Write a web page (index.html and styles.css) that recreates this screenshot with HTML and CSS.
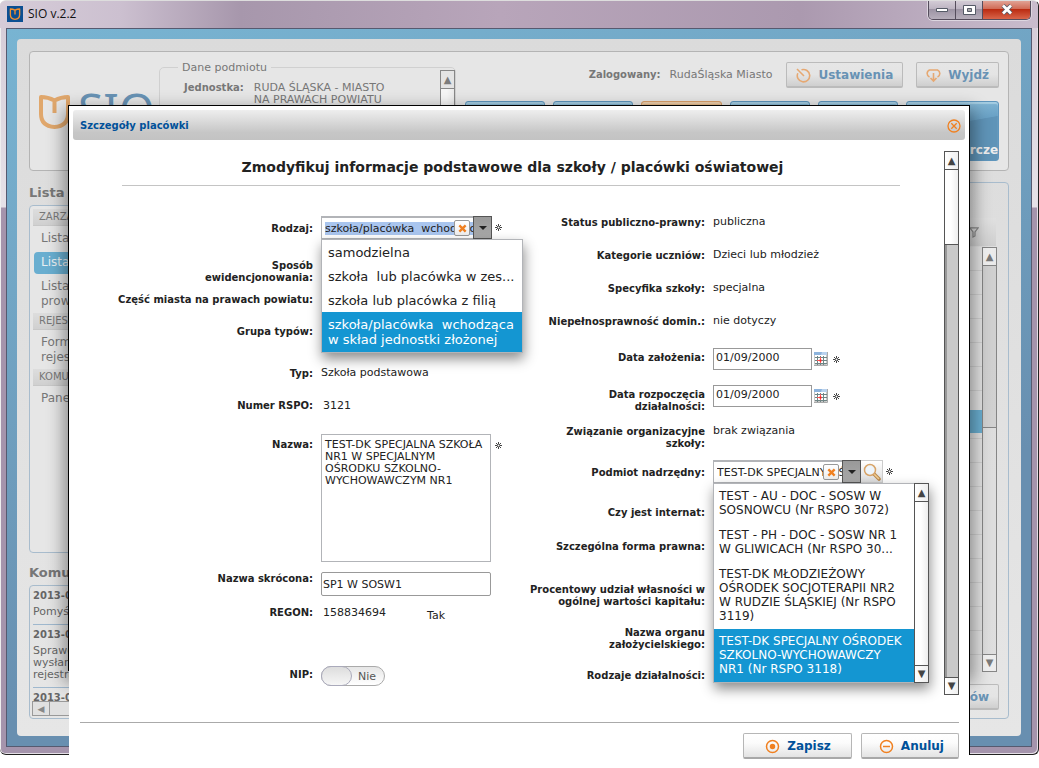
FILE: index.html
```html
<!DOCTYPE html>
<html lang="pl">
<head>
<meta charset="utf-8">
<title>SIO v.2.2</title>
<link rel="stylesheet" href="styles.css">
</head>
<body>
<svg class="defs" aria-hidden="true">
  <symbol id="star" viewBox="0 0 9 9"><path d="M4.500 1v7M1 4.500h7M2 2l5 5M7 2L2 7" stroke="#444" fill="none"/><circle cx="4.500" cy="4.500" r="1" fill="#fff"/></symbol>
  <symbol id="cal" viewBox="0 0 14 14"><path d="M.5.500h12v12H.500z" fill="#fff" stroke="#c9c9c9"/><path d="M0 0h13v3H0z" fill="#8db3dc"/><path d="M8 0h5v3H7z" fill="#b9d2ee"/><path d="M1 5.500h12M1 8.500h12M1 11.500h12M3.500 4v9M6.500 4v9M9.500 4v9" stroke="#6f8585"/><path d="M13.500 0v13.500H0" stroke="#aaa" fill="none"/><path d="M3 8.500h4M6.500 5v6" stroke="#f55" fill="none"/><path d="M5.500 7.500h2v2h-2z" fill="#f22"/></symbol>
  <symbol id="cross" viewBox="0 0 10 10"><path d="M1.500 1.500l7 7M8.500 1.500l-7 7" stroke="#f08020" stroke-width="2.600" fill="none"/></symbol>
  <symbol id="book" viewBox="0 0 31 35"><path d="M2 3q7 0 13.500 3.500Q22 3 29 3v17q0 12-13.500 13Q2 32 2 20zM15.500 7v12" fill="none" stroke="currentColor" stroke-width="4" stroke-linejoin="round"/></symbol>
</svg>

<div class="screen">
<div class="window">
  <header class="titlebar">
    <span class="app-icon"><svg><use href="#book"/></svg></span>
    <span class="app-name">SIO v.2.2</span>
    <div class="win-buttons">
      <button class="wb" aria-label="Minimalizuj"><svg width="12" height="6"><path d="M.5 1.500h11v3H.500z" fill="#fff" stroke="#555a66"/></svg></button>
      <button class="wb" aria-label="Maksymalizuj"><svg width="13" height="10"><path d="M.5.500h12v9H.500z" fill="#fff" stroke="#555a66"/><path d="M4.500 3.500h4v3h-4z" fill="#aaa" stroke="#555a66"/></svg></button>
      <button class="wb close" aria-label="Zamknij okno"><svg width="12" height="11"><path d="M2 1.500l8 8M10 1.500l-8 8" stroke="#555a66" stroke-width="4.400"/><path d="M2 1.500l8 8M10 1.500l-8 8" stroke="#fff" stroke-width="2.800"/></svg></button>
    </div>
  </header>
  <div class="client">
    <main class="panel">
      <section class="top-box">
        <div class="logo"><svg class="mark"><use href="#book"/></svg><span>SIO</span></div>
        <fieldset class="entity">
          <legend>Dane podmiotu</legend>
          <dl><dt>Jednostka:</dt><dd>RUDA ŚLĄSKA - MIASTO<br>NA PRAWACH POWIATU</dd></dl>
          <div class="sb entity-sb"><button aria-label="W górę">▲</button><i></i></div>
        </fieldset>
        <div class="top-right">
          <div class="user-row">
            <b>Zalogowany:</b><span>RudaŚląska Miasto</span>
            <button class="btn dim settings"><svg width="15" height="15" fill="none" stroke="#e6a872" stroke-width="1.600"><path d="M5.500 1.800A6.200 6.200 0 1 1 1.800 5.200M1 1l7 7"/></svg>Ustawienia</button>
            <button class="btn dim"><svg width="15" height="15" fill="none" stroke="#e6a872" stroke-width="1.600"><path d="M3.500 9A3.800 3.800 0 0 1 3.500 2h8a3.800 3.800 0 0 1 0 7M7.500 5v8M4.500 10l3 3 3-3"/></svg>Wyjdź</button>
          </div>
          <nav class="tiles"><a href="#" aria-label="1"></a><a href="#" aria-label="2"></a><a href="#" class="orange" aria-label="3"></a><a href="#" aria-label="4"></a><a href="#" aria-label="5"></a><a href="#" class="last">rcze</a></nav>
        </div>
      </section>
      <div class="cols">
        <aside class="side">
          <h2>Lista</h2>
          <nav class="menu">
            <h3>ZARZĄ</h3>
            <a href="#">Lista</a><a href="#" class="on">Lista</a><a href="#">Lista<br>prow</a>
            <h3>REJES</h3>
            <a href="#">Form<br>rejes</a>
            <h3>KOMU</h3>
            <a href="#">Pane</a>
          </nav>
          <h2>Komu</h2>
          <div class="news">
            <article><b>2013-0</b><p>Pomyś</p></article>
            <article><b>2013-0</b><p>Sprawo<br>wysłan<br>rejestra</p></article>
            <article><b>2013-0</b></article>
            <div class="hsb"><button aria-label="W lewo">◀</button></div>
          </div>
        </aside>
        <section class="list-box">
          <div class="list-head"><svg width="10" height="11"><path d="M.8.800h8.400L6 5v4L4 10V5z" fill="none" stroke="#888" stroke-width="1.200"/></svg></div>
          <div class="list-body"><div class="rows"><div class="row-on"></div></div>
            <div class="sb"><button aria-label="W górę">▲</button><i class="thumb-gray"></i><i></i><button aria-label="W dół">▼</button></div></div>
          <button class="btn dim list-btn">ów</button>
        </section>
      </div>
    </main>
  </div>
  <div class="edge"></div>
</div>

<section class="dialog" role="dialog" aria-labelledby="dlg-title">
  <header class="dlg-head"><h1 id="dlg-title">Szczegóły placówki</h1>
    <button aria-label="Zamknij"><svg width="14" height="14" fill="none" stroke="#f08020" stroke-width="1.300"><circle cx="7" cy="7" r="6"/><path d="M4.300 4.300l5.400 5.400M9.700 4.300L4.300 9.700"/></svg></button></header>
  <div class="dlg-body">
    <div class="content">
      <h2>Zmodyfikuj informacje podstawowe dla szkoły / placówki oświatowej</h2>
      <form class="form">
        <div class="fields left">
          <label for="rodzaj">Rodzaj:</label>
          <div class="combo"><input id="rodzaj" class="selected" value="szkoła/placówka  wchodząca"><button type="button" class="clear" aria-label="Wyczyść"><svg><use href="#cross"/></svg></button><button type="button" class="arrow" aria-label="Rozwiń"></button><svg class="star"><use href="#star"/></svg>
            <ul class="drop" role="listbox"><li>samodzielna</li><li>szkoła&nbsp; lub placówka w zes...</li><li>szkoła lub placówka z filią</li><li class="on">szkoła/placówka&nbsp; wchodząca<br>w skład jednostki złożonej</li></ul></div>
          <span class="lab">Sposób<br>ewidencjonowania:</span><span></span>
          <span class="lab">Część miasta na prawach powiatu:</span><span></span>
          <span class="lab">Grupa typów:</span><span></span>
          <span class="lab">Typ:</span><span class="val">Szkoła podstawowa</span>
          <span class="lab">Numer RSPO:</span><span class="val in">3121</span>
          <label for="nazwa">Nazwa:</label>
          <div class="area"><textarea id="nazwa">TEST-DK SPECJALNA SZKOŁA
NR1 W SPECJALNYM
OŚRODKU SZKOLNO-
WYCHOWAWCZYM NR1</textarea><svg class="star"><use href="#star"/></svg></div>
          <label for="skrot">Nazwa skrócona:</label><input id="skrot" class="short" value="SP1 W SOSW1">
          <span class="lab">REGON:</span><span class="val in regon">158834694<span>Tak</span></span>
          <label for="nip">NIP:</label><label class="toggle"><input id="nip" type="checkbox"><span>Nie</span></label>
        </div>
        <div class="fields right">
          <span class="lab">Status publiczno-prawny:</span><span class="val">publiczna</span>
          <span class="lab">Kategorie uczniów:</span><span class="val">Dzieci lub młodzież</span>
          <span class="lab">Specyfika szkoły:</span><span class="val">specjalna</span>
          <span class="lab">Niepełnosprawność domin.:</span><span class="val">nie dotyczy</span>
          <label for="d1">Data założenia:</label><div class="date"><input id="d1" value="01/09/2000"><button type="button" aria-label="Kalendarz"><svg><use href="#cal"/></svg></button><svg class="star"><use href="#star"/></svg></div>
          <label for="d2">Data rozpoczęcia<br>działalności:</label><div class="date"><input id="d2" value="01/09/2000"><button type="button" aria-label="Kalendarz"><svg><use href="#cal"/></svg></button><svg class="star"><use href="#star"/></svg></div>
          <span class="lab">Związanie organizacyjne<br>szkoły:</span><span class="val">brak związania</span>
          <label for="podmiot">Podmiot nadrzędny:</label>
          <div class="combo narrow"><input id="podmiot" value="TEST-DK SPECJALNY OŚRODEK"><button type="button" class="clear" aria-label="Wyczyść"><svg><use href="#cross"/></svg></button><button type="button" class="arrow" aria-label="Rozwiń"></button><button type="button" class="search" aria-label="Szukaj"><svg width="18" height="18" fill="none"><path d="M11 11l5 5" stroke="#b98a50" stroke-width="3.600" stroke-linecap="round"/><path d="M11.500 11.500l4 4" stroke="#f3cf94" stroke-width="1.600" stroke-linecap="round"/><circle cx="7" cy="7" r="5.500" fill="#eef5fb" stroke="#d8a468" stroke-width="1.500"/></svg></button><svg class="star"><use href="#star"/></svg>
            <div class="drop wide"><ul role="listbox"><li>TEST - AU - DOC - SOSW W<br>SOSNOWCU (Nr RSPO 3072)</li><li>TEST - PH - DOC - SOSW NR 1<br>W GLIWICACH (Nr RSPO 30...</li><li>TEST-DK MŁODZIEŻOWY<br>OŚRODEK SOCJOTERAPII NR2<br>W RUDZIE ŚLĄSKIEJ (Nr RSPO<br>3119)</li><li class="on">TEST-DK SPECJALNY OŚRODEK<br>SZKOLNO-WYCHOWAWCZY<br>NR1 (Nr RSPO 3118)</li></ul>
              <div class="sb"><button type="button" aria-label="W górę">▲</button><i></i><button type="button" aria-label="W dół">▼</button></div></div></div>
          <span class="lab">Czy jest internat:</span><span></span>
          <span class="lab">Szczególna forma prawna:</span><span></span>
          <span class="lab">Procentowy udział własności w<br>ogólnej wartości kapitału:</span><span></span>
          <span class="lab">Nazwa organu<br>założycielskiego:</span><span></span>
          <span class="lab">Rodzaje działalności:</span><span></span>
        </div>
      </form>
    </div>
    <div class="sb main-sb"><button aria-label="W górę">▲</button><i></i><i class="track"></i><button aria-label="W dół">▼</button></div>
  </div>
  <footer class="dlg-foot">
    <button class="btn"><svg width="15" height="15" fill="none" stroke="#f08020" stroke-width="1.500"><circle cx="7.500" cy="7.500" r="6"/><circle cx="7.500" cy="7.500" r="2" fill="#f08020"/></svg>Zapisz</button>
    <button class="btn"><svg width="15" height="15" fill="none" stroke="#f08020" stroke-width="1.500"><circle cx="7.500" cy="7.500" r="6"/><path d="M4 7.500h7"/></svg>Anuluj</button>
  </footer>
</section>
</div>
</body>
</html>
```
FILE: styles.css
```css
* { box-sizing: border-box; }
body { margin: 0; background: #fff; color: #222; font: 10px/12px "DejaVu Sans", Verdana, sans-serif; }
h1, h2, h3, p, ul, dl, dd { margin: 0; padding: 0; }
ul { list-style: none; }
button, input, textarea { font: inherit; color: inherit; margin: 0; padding: 0; border-radius: 0; }
input, textarea, .val, .toggle span, .news p, .user-row span, dd { font-size: 11px; }
button { display: flex; align-items: center; justify-content: center; border: 0; background: none; }
a { text-decoration: none; color: inherit; }
.defs { display: none; }
.screen { position: relative; min-height: 768px; overflow: hidden; }

/* system window */
.window { position: relative; overflow: hidden; height: 755px; display: flex; flex-direction: column; padding: 0 6px 7px; border: 1px solid #222; border-top-color: #ddd; border-width: 1px 1px 1px 0; border-radius: 6px; background: linear-gradient(#d3cad6, #e6e2e8 206px, #a594ac 207px, #a594ac); box-shadow: inset 1px 0 #eee, inset -1px -1px #e4dfe6; }
.titlebar { display: flex; align-items: flex-start; height: 27px; margin: 0 -6px; padding: 5px 7px 0; background: linear-gradient(90deg, #d6ccd8, #ccc0d0 120px, #a797ac 240px, #b8a5ba 500px, #ab99af 800px, #c9bccd); }
.app-icon { display: flex; width: 16px; height: 16px; background: #0b4f92; color: #f09030; padding: 2px; }
.app-icon svg { width: 12px; height: 12px; }
.app-name { flex: 1; margin-left: 5px; color: #111; font: 12px/16px "Open Sans", sans-serif; }
.win-buttons { display: flex; margin-top: -6px; border: 1px solid #554d5c; border-top: 0; border-radius: 0 0 5px 5px; overflow: hidden; box-shadow: 0 0 0 1px #ddd6e0; }
.wb { width: 27px; height: 19px; border-right: 1px solid #554d5c; background: linear-gradient(#d5ced8, #bbb2c0 50%, #9d94a4 50%, #b6aebb); }
.close { width: 47px; border: 0; background: linear-gradient(#e3a99c, #cf6650 50%, #bb2c12 50%, #d9654a); }
.client { flex: 1; display: flex; padding: 10px; border: 1px solid #565a70; background: linear-gradient(165deg, #78b4d2, #688fb0 70%); }
.panel { flex: 1; min-width: 0; display: flex; flex-direction: column; gap: 11px; padding: 12px 12px 17px 12px; border-radius: 4px; background: linear-gradient(#dbdbdb, #e6e6e6); color: #777; }
.top-box { display: flex; height: 120px; padding: 10px 9px 0 9px; border: 1px solid #b4b4b4; border-radius: 4px; background: #e6e6e6; }
.logo { display: flex; width: 120px; padding-top: 31px; color: #6892b4; font: 46px/46px "Noto Sans", sans-serif; gap: 8px; }
.mark { flex: none; width: 31px; height: 37px; color: #e0a76c; }
.logo span { margin-top: -7px; }
.entity { position: relative; width: 297px; min-width: 0; margin: -1px 0 0; padding: 0 15px 0 24px; border: 1px solid #d0d0d0; border-radius: 5px; }
.entity legend { margin-left: -6px; padding: 0 4px; font-size: 11px; line-height: 13px; }
.entity dl { display: flex; gap: 10px; margin-top: 8px; }
.entity dt { font-weight: bold; }
.entity-sb { position: absolute; right: 0; top: -4px; bottom: 0; opacity: .65; }
.top-right { flex: 1; display: flex; flex-direction: column; gap: 13px; margin-left: 9px; }
.user-row { display: flex; align-items: center; justify-content: flex-end; }
.user-row b { margin-right: 9px; }
.settings { margin: 0 13px 0 14px; }
.btn { height: 26px; gap: 7px; padding: 1px 10px 0; border: 1px solid #b6b6b6; border-bottom: 2px solid #a8a8a8; border-radius: 2px; background: linear-gradient(#fff, #fbfbfb 40%, #e3e3e3); color: #00519a; font-weight: bold; font-size: 12px; white-space: nowrap; }
.btn.dim { padding: 1px 9px 0; background: linear-gradient(#e6e6e6, #e4e4e4 50%, #cfcfcf); color: #6892b4; border-color: #bbb; }
.tiles { display: flex; gap: 8px; height: 60px; }
.tiles a { flex: 80; border: 1px solid #5f96bd; border-radius: 3px; background: linear-gradient(170deg, #94c4de, #6aa2c6 40%, #5f94b8 41%, #5f94b8); box-shadow: inset 0 2px 1px #a5cde2; }
.tiles .orange { border-color: #dba06a; background: #e5b888; box-shadow: inset 0 2px 1px #efd0ae; }
.tiles .last { flex: 93; display: flex; align-items: flex-end; justify-content: flex-end; padding-bottom: 4px; color: #eee; font-weight: bold; font-size: 12px; }
.cols { flex: 1; display: flex; gap: 12px; }
.side { width: 220px; display: flex; flex-direction: column; gap: 4px; padding-top: 3px; }
.side h2 { font-size: 13px; line-height: 16px; }
.menu { height: 348px; margin-bottom: 8px; padding: 3px; border: 1px solid #a8bccd; border-radius: 4px; background: #e6e6e6; font-size: 12px; line-height: 15px; }
.menu h3 { font-size: 10px; font-weight: normal; line-height: 16px; padding: 0 6px; background: linear-gradient(#ddd, #d0d0d0); border-bottom: 1px solid #c8c8c8; }
.menu a { display: block; margin: 2px 1px 0; padding: 3px 7px 4px; border-radius: 4px; }
.menu .on { background: #69aed0; color: #e8eef2; }
.news { position: relative; flex: 1; padding: 4px 3px; border: 1px solid #a8bccd; border-radius: 4px; color: #666; }
.news article { display: flex; flex-direction: column; gap: 4px; padding-bottom: 6px; margin-bottom: 4px; border-bottom: 1px solid #9fb8ce; }
.news article + article + article { border: 0; }
.hsb { position: absolute; left: 2px; right: 2px; bottom: 2px; display: flex; height: 15px; border: 1px solid #999; background: #e0e0e0; }
.hsb button { width: 17px; border-right: 1px solid #999; font-size: 9px; color: #888; }
.list-box { flex: 1; display: flex; flex-direction: column; padding: 35px 9px 8px; border: 1px solid #a8bccd; border-radius: 4px; }
.list-head { display: flex; align-items: center; justify-content: flex-end; height: 28px; margin-right: 3px; padding-right: 17px; background: linear-gradient(#e0e0e0, #cfcfcf); }
.list-body { flex: 1; display: flex; margin: 1px 2px 12px 0; }
.list-body .sb { opacity: .65; }
.rows { flex: 1; padding-top: 163px; background: repeating-linear-gradient(#e4e4e4 0 23px, #d2d2d2 23px 24px); }
.row-on { height: 23px; background: #6bb0d2; }
.list-btn { align-self: flex-end; }

/* scrollbars */
.sb { flex: none; display: flex; flex-direction: column; width: 15px; border: 1px solid #555; background: #fff; }
.sb button { flex: none; height: 17px; color: #444; font-size: 10px; line-height: 10px; background: linear-gradient(90deg, #fff, #eee); }
.sb i { flex: 1; border-top: 1px solid #555; background: linear-gradient(90deg, #fff 45%, #eee); }
.sb i + button { border-top: 1px solid #555; }
.sb .track, .sb .thumb-gray { background: #c9c9c9; box-shadow: inset 2px 0 #999; }
.list-body .thumb-gray { flex: 162; box-shadow: none; }
.list-body .thumb-gray + i { flex: 228; background: #dcdcdc; }
.list-body .sb, .entity-sb, .entity-sb button { background: #e4e4e4; }

/* dialog */
.edge { position: absolute; top: 104px; left: 68px; right: 68px; bottom: 83px; border: solid #000; border-width: 1px 0 0 1px; box-shadow: 0 8px 16px 4px rgba(0, 0, 0, .4); background: #fff; }
.dialog { position: absolute; top: 106px; left: 69px; right: 69px; bottom: 0; display: flex; flex-direction: column; padding: 4px 5px 0 4px; background: #fff; }
.dialog::after { content: ""; position: absolute; top: 0; right: 0; bottom: 13px; width: 1px; background: #000; }
.dlg-head { display: flex; align-items: center; justify-content: space-between; height: 30px; padding: 1px 4px 0 7px; border-radius: 3px; background: linear-gradient(#eee, #c6c6c6 75%, #c3c3c3); }
.dlg-head h1 { font-size: 10px; color: #00519a; }
.dlg-body { display: flex; height: 544px; margin: 11px 6px 0; }
.content { flex: 1; min-width: 0; padding: 6px 44px 0 43px; }
.content h2 { padding: 0 0 8px 3px; border-bottom: 1px solid #c4c4c4; text-align: center; font-size: 14px; line-height: 20px; white-space: nowrap; }
.main-sb i { flex: 74; }
.main-sb .track { flex: 434; }
.form { display: flex; margin-left: -10px; }
.fields { display: grid; align-items: start; column-gap: 8px; text-align: left; }
.left { grid-template-columns: 201px 191px; padding-top: 30px; grid-template-rows: 37px 34px 32px 42px 32px 39px 134px 34px 62px 30px; }
.right { flex: 1; grid-template-columns: 193px 1fr; padding-top: 24px; grid-template-rows: 33px 33px 33px 36px 37px 37px 41px 40px 34px 43px 43px 43px 26px; }
.lab, .fields > label { padding-top: 7px; text-align: right; font-weight: bold; white-space: nowrap; justify-self: end; }
.val { padding-top: 6px; }
.in { padding: 7px 0 0 2px; }
.regon { display: flex; gap: 41px; }
.regon span { padding-top: 3px; }
.star { flex: none; width: 9px; height: 9px; }
.combo { position: relative; display: flex; align-items: center; height: 23px; }
.combo > input { width: 152px; height: 23px; padding: 0 0 0 3px; border: 2px solid #b2b4b8; border-width: 2px 0 1px 1px; background: #fff; }
.combo > .selected { background: linear-gradient(#a9c5ee, #a9c5ee) 3px 4px / 148px 13px no-repeat #fff; }
.clear { position: absolute; left: 133px; top: 4px; width: 16px; height: 16px; border: 1px solid #999; border-radius: 2px; background: linear-gradient(#fff, #eee); }
.clear svg { width: 9px; height: 9px; }
.narrow > input { width: 129px; }
.narrow .clear { left: 110px; }
.arrow { width: 19px; height: 23px; border: 1px solid #555; background: linear-gradient(#999, #aaa); }
.arrow::after { content: ""; border: 4px solid transparent; border-top-color: #222; border-bottom: 0; }
.search { width: 22px; height: 23px; border: 1px solid #ccc; border-left: 0; background: linear-gradient(#fff, #ddd); }
.combo .star { margin-left: 2px; }
.drop { position: absolute; z-index: 2; top: 23px; left: 0; width: 202px; border: 1px solid #b2b4b8; background: #fff; box-shadow: 1px 6px 12px rgba(0, 0, 0, .45); font-size: 13px; line-height: 15px; white-space: nowrap; }
.drop li { padding: 5px 0 4px 6px; }
.drop .on { background: #1496d2; color: #fff; padding-bottom: 5px; }
.wide { display: flex; width: 216px; font-size: 12px; line-height: 14px; }
.wide ul { flex: 1; min-width: 0; }
.wide li, .wide .on { padding: 5px 0 6px 5px; }
.wide .sb { margin: -1px; }
.area { display: flex; align-items: flex-start; gap: 3px; padding-top: 2px; }
.area textarea { width: 170px; height: 128px; padding: 4px 3px; border: 1px solid #b2b4b8; background: #fff; resize: none; overflow: hidden; }
.area .star { margin-top: 7px; }
.short { width: 170px; height: 24px; margin-top: 6px; padding: 0 1px; border: 1px solid #999; border-radius: 2px; }
.fields > .toggle { position: relative; justify-self: start; width: 64px; height: 20px; margin-top: 4px; padding: 4px 8px 0 0; border: 1px solid #aaa; border-radius: 10px; background: linear-gradient(#e6e6e6, #fff); font-weight: normal; color: #555; }
.toggle input { position: absolute; left: -1px; top: -1px; appearance: none; width: 31px; height: 20px; margin: 0; border: 1px solid #aab; border-radius: 10px; background: linear-gradient(#ddd, #f6f6f6); }
.date { display: flex; align-items: center; padding-top: 3px; }
.date input { width: 99px; height: 22px; padding: 0 2px 3px; border: 1px solid #999; background: #fff; }
.date button { width: 14px; height: 14px; margin: 0 4px 0 2px; }
.date button svg { width: 14px; height: 14px; }
.dlg-foot { display: flex; justify-content: flex-end; gap: 9px; margin: 27px 6px 0 7px; padding-top: 10px; border-top: 1px solid #aaa; }
.dlg-foot .btn { padding: 1px 14px 0 17px; }
.dlg-foot .btn:first-child { padding: 1px 20px 0 21px; }
```
